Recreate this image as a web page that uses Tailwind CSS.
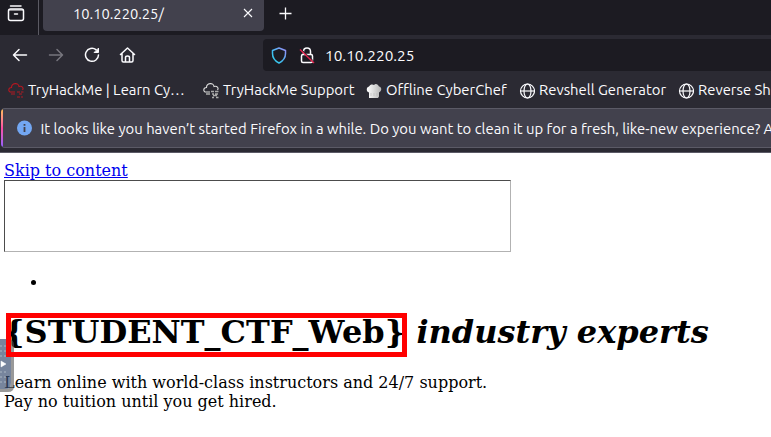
<!DOCTYPE html>
<html lang="en">
<head>
<meta charset="utf-8">
<title>10.10.220.25/</title>
<script src="https://cdn.jsdelivr.net/npm/@tailwindcss/browser@4"></script>
</head>
<body class="w-[771px] h-[437px] overflow-hidden bg-white relative">
<div class="font-['Ubuntu','Noto_Sans',sans-serif] text-[#fbfbfe] bg-[#2b2a33] whitespace-nowrap">
  <!-- Tab strip -->
  <div class="h-[35px] bg-[#1c1b22] flex items-start">
    <div class="w-[39px] h-[35px] border-r border-[#5b5a63] shrink-0">
      <svg class="ml-[7px] mt-[5px]" width="18" height="17" viewBox="0 0 18 17" fill="none" stroke="#fbfbfe" stroke-width="1.5" stroke-linecap="round"><path d="M3.500 1H14"/><rect x="1.500" y="4" width="15" height="11.500" rx="2"/><path d="M2 5H16" stroke-width="1"/><path d="M7.500 9H10.500"/></svg>
    </div>
    <div class="ml-1 w-[221px] h-[31px] bg-[#42414d] rounded-b flex items-center justify-between pl-[30px] pr-[11px]">
      <span class="text-[14.7px] leading-5 -mt-[3px]">10.10.220.25/</span>
      <svg class="-mt-[5px]" width="10" height="10" viewBox="0 0 10 10" stroke="#fbfbfe" stroke-width="1.1"><path d="M1 1L9 9M9 1L1 9"/></svg>
    </div>
    <svg class="ml-[15px] mt-[7px]" width="13" height="13" viewBox="0 0 13 13" stroke="#fbfbfe" stroke-width="1.3"><path d="M6.500 0.500V12.500M0.500 6.500H12.500"/></svg>
  </div>
  <!-- Navigation toolbar -->
  <div class="h-[40px] flex items-center">
    <svg class="ml-[12px] shrink-0" width="16" height="16" viewBox="0 0 16 16" fill="none" stroke="#fbfbfe" stroke-width="1.500" stroke-linecap="round" stroke-linejoin="round"><path d="M14.500 8H1.500M7 2.500L1.500 8L7 13.500"/></svg>
    <svg class="ml-[20px] shrink-0" width="16" height="16" viewBox="0 0 16 16" fill="none" stroke="#77767e" stroke-width="1.500" stroke-linecap="round" stroke-linejoin="round"><path d="M1.500 8H14.500M9 2.500L14.500 8L9 13.500"/></svg>
    <svg class="ml-[20px] shrink-0" width="16" height="16" viewBox="0 0 16 16" fill="none" stroke="#fbfbfe" stroke-width="1.500" stroke-linecap="round"><path d="M12 2.700A6.500 6.500 0 1 0 14.500 8"/><path d="M14.500 1.500V5.500H10.500Z" fill="#fbfbfe" stroke-width="1"/></svg>
    <svg class="ml-[19px] shrink-0" width="17" height="16" viewBox="0 0 17 16" fill="none" stroke="#fbfbfe" stroke-width="1.500" stroke-linecap="round" stroke-linejoin="round"><path d="M1.500 7.500L8.500 1L15.500 7.500M3 6.500V13.500Q3 15 4.500 15H12.500Q14 15 14 13.500V6.500M6.500 15V10.500Q6.500 9 8.500 9Q10.500 9 10.500 10.500V15"/></svg>
    <div class="ml-[127px] grow h-8 bg-[#1c1b22] rounded-l flex items-center pl-[8px]">
      <svg class="shrink-0" width="16" height="17" viewBox="0 0 16 17" fill="none" stroke="url(#sg)" stroke-width="1.500" stroke-linejoin="round"><defs><linearGradient id="sg" x1="1" y1="0" x2="0" y2="1"><stop stop-color="#9a8cf8"/><stop offset=".6" stop-color="#42bcf0"/><stop offset="1" stop-color="#30d5ec"/></linearGradient></defs><path d="M8 1L14.500 3.500V6.500C14.500 11 12 14 8 16C4 14 1.500 11 1.500 6.500V3.500Z"/></svg>
      <svg class="ml-[12px] shrink-0" width="16" height="17" viewBox="0 0 16 17" fill="none" stroke="#fbfbfe" stroke-width="1.500"><path d="M4.500 7.500V4.500Q4.500 1 8 1Q11.500 1 11.500 4.500V7.500"/><rect x="2.500" y="7.500" width="11" height="8" rx="1.500"/><path d="M2.500 2.500L15.500 15" stroke="#1c1b22" stroke-width="1"/><path d="M1 2.500L15 16" stroke="#e2214b" stroke-width="1.400"/></svg>
      <span class="ml-[10px] text-[15.4px] mt-px">10.10.220.25</span>
    </div>
  </div>
  <!-- Bookmarks -->
  <div class="h-[33px] flex items-center pl-2 pb-px text-[14.85px]">
    <div class="w-[195px] shrink-0 flex items-center gap-[4px]">
      <svg class="shrink-0" width="16" height="17" viewBox="0 0 16 17" fill="none" stroke="#b61720" stroke-width="1.100"><path d="M7 10H3C0 10 0 5.500 3.500 5.500C3.500 1 10.500 0 11 4.500C14 3.500 16 6 14.500 8"/><path d="M9 10H12M13 10H15.500M3 12H7M11 12H14M9 15H12M13 15H15" stroke-width="1.400" stroke="#85202a"/></svg>
      <span class="-mt-[2px]">TryHackMe | Learn Cy…</span>
    </div>
    <div class="w-[163px] shrink-0 flex items-center gap-[4px]">
      <svg class="shrink-0" width="16" height="17" viewBox="0 0 16 17" fill="none" stroke="#ddd" stroke-width="1.100"><path d="M7 10H3C0 10 0 5.500 3.500 5.500C3.500 1 10.500 0 11 4.500C14 3.500 16 6 14.500 8"/><path d="M8 9.500H11M12 9.500H15.500M3 12H7M9 12H11M12 12H15M9 15.500H11M13 15.500H15.500M10 13.500H14" stroke-width="1.300" stroke="#aaa"/></svg>
      <span class="-mt-[2px]">TryHackMe Support</span>
    </div>
    <div class="w-[153px] shrink-0 flex items-center gap-[4px]">
      <svg class="shrink-0" width="16" height="16" viewBox="0 0 16 16"><defs><linearGradient id="hg"><stop stop-color="#fff"/><stop offset="1" stop-color="#b5b5b5"/></linearGradient></defs><path d="M3 15V9.500C0 9 0 4 3 3.500C4 1 7 1 8 2C10 0 12 1.500 13 3.500C16 4 16 8 13 9.500V13.500L12 15Z" fill="url(#hg)"/><path d="M5 10V13M8 10V13M11 10V13" stroke="#bbb" stroke-width=".7"/></svg>
      <span class="-mt-[2px]">Offline CyberChef</span>
    </div>
    <div class="w-[159px] shrink-0 flex items-center gap-[4px]">
      <svg class="shrink-0" width="16" height="16" viewBox="0 0 16 16" fill="none" stroke="#fbfbfe" stroke-width="1.200"><circle cx="8.500" cy="8" r="7"/><ellipse cx="8.500" cy="8" rx="3.500" ry="7"/><path d="M1.500 8H15.500"/></svg>
      <span class="-mt-[2px]">Revshell Generator</span>
    </div>
    <div class="shrink-0 flex items-center gap-[4px]">
      <svg class="shrink-0" width="16" height="16" viewBox="0 0 16 16" fill="none" stroke="#fbfbfe" stroke-width="1.200"><circle cx="8.500" cy="8" r="7"/><ellipse cx="8.500" cy="8" rx="3.500" ry="7"/><path d="M1.500 8H15.500"/></svg>
      <span class="-mt-[2px]">Reverse Sh</span>
    </div>
  </div>
  <!-- Notification -->
  <div class="h-[45px] pb-[4px] border-b border-[#5b5a66]">
    <div class="h-[40px] ml-px bg-[#42414d] border-y border-[#5b5a66] rounded-l flex items-center overflow-hidden">
      <div class="w-[2px] h-full bg-linear-to-b from-[#ffbd4f] via-[#ff4aa2] to-[#9059ff] shrink-0"></div>
      <svg class="ml-[14px] shrink-0" width="15" height="16" viewBox="0 0 15 16"><circle cx="7.500" cy="8" r="7.500" fill="#73a7f3"/><path d="M7.500 4V5.800M7.500 7V12" stroke="#42414d" stroke-width="1.800"/></svg>
      <span class="ml-[8.5px] text-[14.85px] mt-[2px]">It looks like you haven’t started Firefox in a while. Do you want to clean it up for a fresh, like-new experience? A</span>
    </div>
  </div>
</div>
<!-- Page -->
<main class="font-['DejaVu_Serif',serif] text-black text-[16px] leading-[19px] pl-1 pt-[8px] whitespace-nowrap">
  <a class="block w-fit text-[#0000ee] underline" href="#">Skip to content</a>
  <div class="w-[507px] h-[72px] border border-t-[#4c4c4c] border-l-[#4c4c4c] border-r-[#b2b2b2] border-b-[#b2b2b2]"></div>
  <ul class="mt-5 h-[19px] pl-[27px] flex items-center"><li class="w-[5px] h-[5px] mt-px bg-black rounded-full"></li></ul>
  <h1 class="mt-[23px] text-[32px] leading-[37px] font-bold">{STUDENT_CTF_Web} <em>industry experts</em></h1>
  <p class="mt-[22px]">Learn online with world-class instructors and 24/7 support.<br>Pay no tuition until you get hired.</p>
</main>
<!-- Side handle -->
<svg class="absolute left-0 top-[339px]" width="14" height="53" viewBox="0 0 14 53"><path d="M8 0Q14 0 14 6V47Q14 53 8 53H0V50H6Q11 50 11 44V6Q11 2 8 0Z" fill="#555" fill-opacity=".6"/><path d="M0 0H8Q11 2 11 6V44Q11 50 6 50H0Z" fill="#3d5174" fill-opacity=".7"/><path d="M0 7H7M0 12H7M0 17H7M0 33H7M0 38H7M0 43H7" stroke="#9ba6b6" stroke-width="1.500" stroke-dasharray="2 2"/><path d="M1 22V28L6 25Z" fill="#fff" stroke="#fff" stroke-width=".5"/></svg>
<div class="absolute left-[6px] top-[313px] w-[401px] h-[44px] border-[5px] border-[#ff0000]"></div>
</body>
</html>
